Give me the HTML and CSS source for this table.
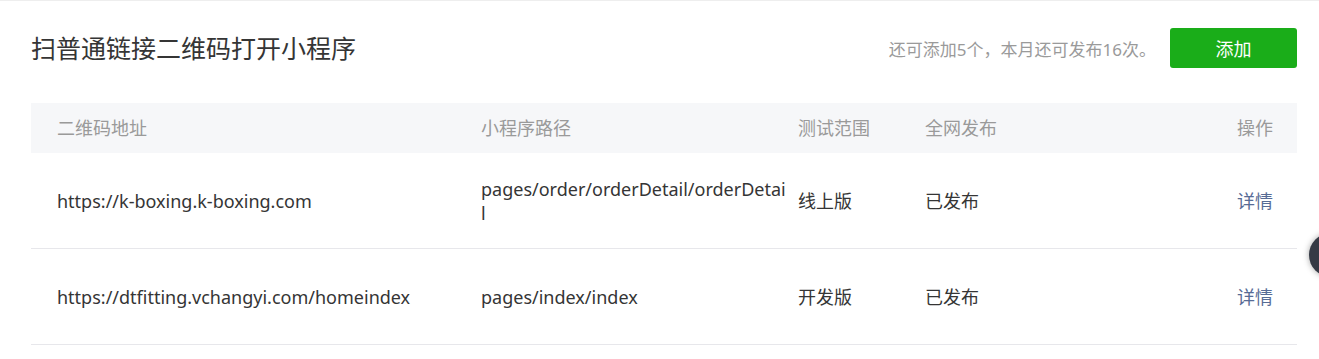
FILE: index.html
```html
<!DOCTYPE html>
<html lang="zh-CN">
<head>
<meta charset="utf-8">
<title>扫普通链接二维码打开小程序</title>
<link rel="stylesheet" href="styles.css">
</head>
<body>
<div class="page">
  <div class="top">
    <h1 class="title">扫普通链接二维码打开小程序</h1>
    <div class="actions">
      <span class="note">还可添加5个，本月还可发布16次。</span>
      <button class="btn">添加</button>
    </div>
  </div>
  <div class="table">
    <div class="row head">
      <div class="cell c1">二维码地址</div>
      <div class="cell c2">小程序路径</div>
      <div class="cell c3">测试范围</div>
      <div class="cell c4">全网发布</div>
      <div class="cell c5">操作</div>
    </div>
    <div class="row">
      <div class="cell c1">https://k-boxing.k-boxing.com</div>
      <div class="cell c2">pages/order/orderDetail/orderDetail</div>
      <div class="cell c3">线上版</div>
      <div class="cell c4">已发布</div>
      <div class="cell c5"><a class="link" href="#">详情</a></div>
    </div>
    <div class="row">
      <div class="cell c1">https://dtfitting.vchangyi.com/homeindex</div>
      <div class="cell c2">pages/index/index</div>
      <div class="cell c3">开发版</div>
      <div class="cell c4">已发布</div>
      <div class="cell c5"><a class="link" href="#">详情</a></div>
    </div>
  </div>
</div>
<div class="float-btn"></div>
</body>
</html>
```

FILE: styles.css
```css
html, body {
  margin: 0;
  padding: 0;
  background: #fff;
}
body {
  font-family: "Noto Sans", "Noto Sans CJK SC", sans-serif;
  color: #353535;
  border-top: 1px solid #eeeeee;
  overflow: hidden;
}
.page {
  padding: 27px 22px 0 31px;
}
.top {
  display: flex;
  justify-content: space-between;
  align-items: center;
  height: 40px;
  margin-bottom: 35px;
}
.title {
  margin: 0;
  font-size: 25px;
  font-weight: normal;
  color: #353535;
  line-height: 40px;
}
.actions {
  display: flex;
  align-items: center;
  gap: 14px;
}
.note {
  font-size: 17px;
  color: #9a9a9a;
}
.btn {
  width: 127px;
  height: 40px;
  border: 0;
  border-radius: 3px;
  background: #1aad19;
  color: #fff;
  font-family: inherit;
  font-size: 18px;
  padding: 0;
}
.table {
  font-size: 18px;
}
.row {
  display: grid;
  grid-template-columns: 450px 317px 127px 1fr auto;
  align-items: center;
  min-height: 95px;
  border-bottom: 1px solid #e7e7eb;
  line-height: 24px;
}
.row.head {
  min-height: 50px;
  background: #f6f7f9;
  border-bottom: 0;
  color: #9a9a9a;
}
.c1 {
  padding-left: 26px;
}
.c2 {
  padding-right: 10px;
  word-break: break-all;
}
.c5 {
  padding-right: 24px;
  text-align: right;
}
.link {
  color: #576b95;
  text-decoration: none;
}
.float-btn {
  position: fixed;
  left: 1309px;
  top: 233px;
  width: 44px;
  height: 44px;
  border-radius: 50%;
  background: #353a45;
  box-shadow: 0 0 6px rgba(0, 0, 0, 0.35);
}
```
